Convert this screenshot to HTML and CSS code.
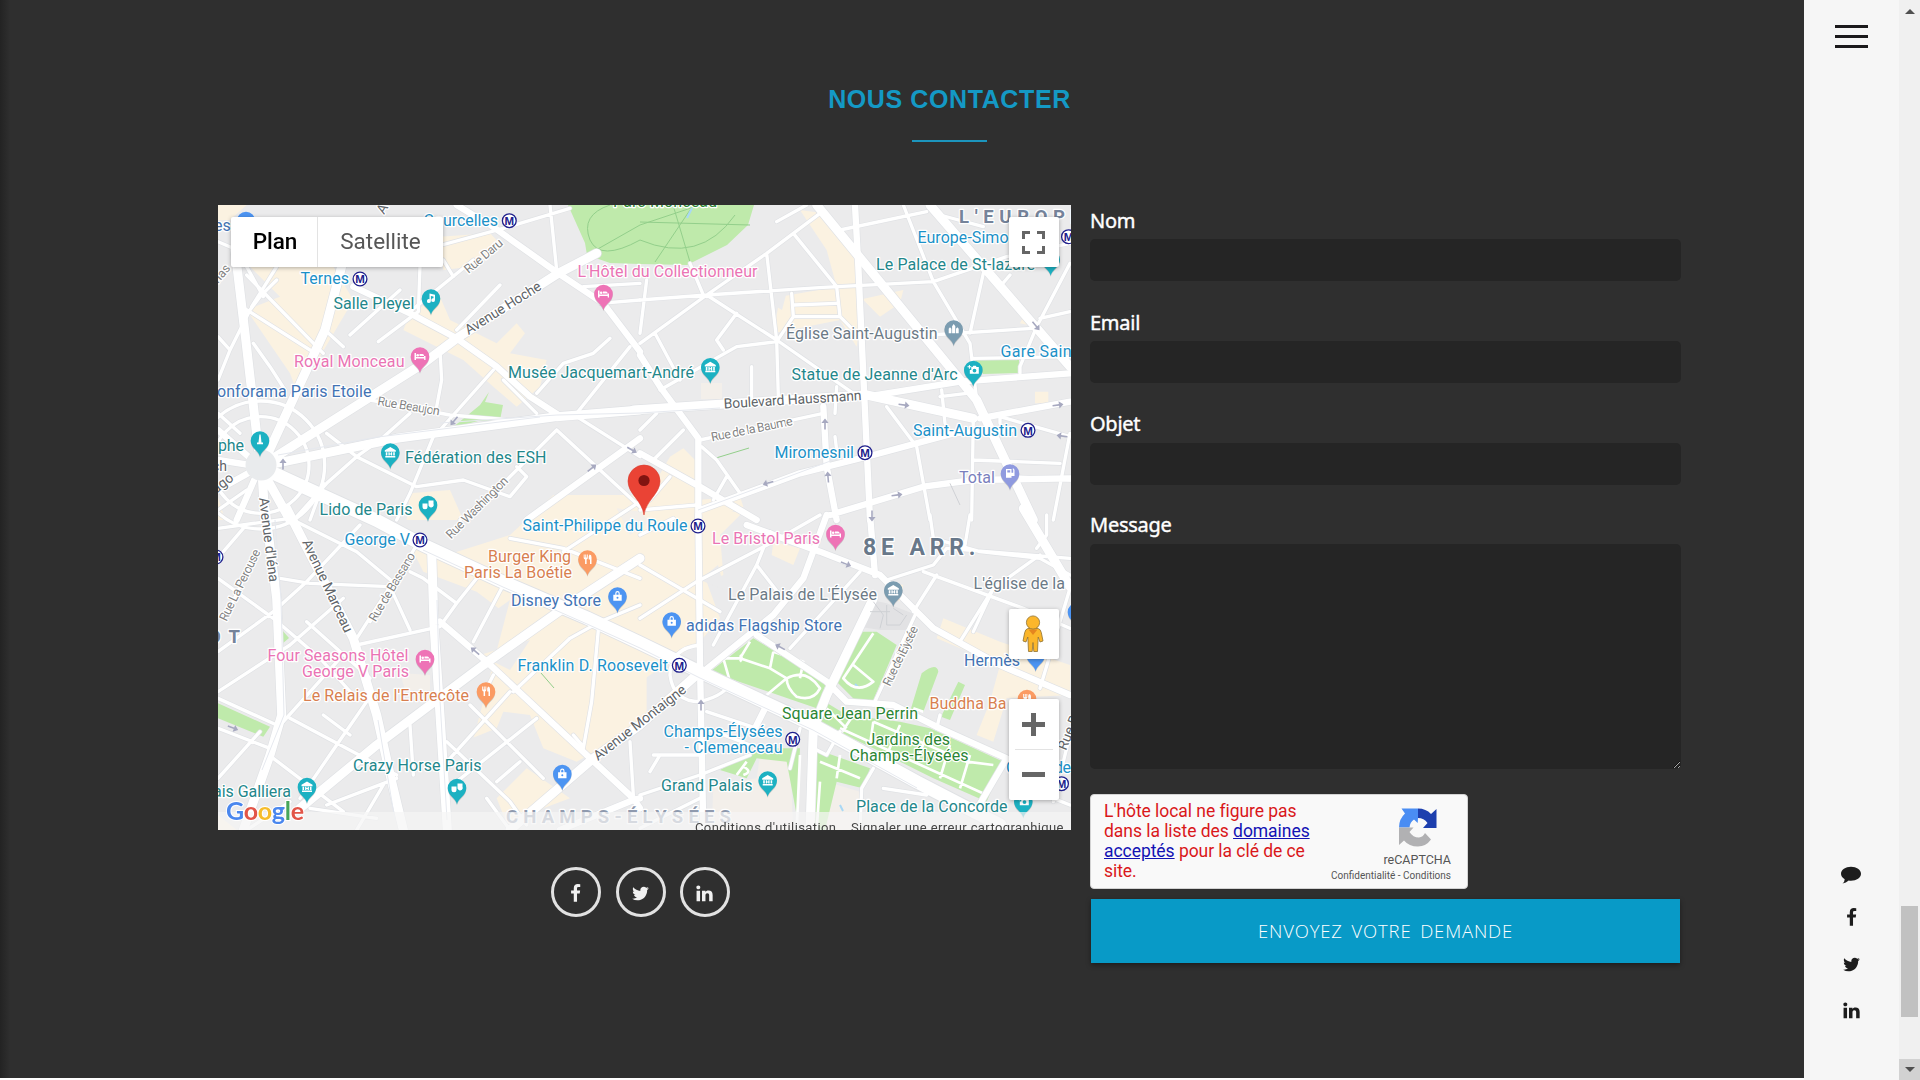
FILE: index.html
```html
<!DOCTYPE html>
<html lang="fr">
<head>
<meta charset="utf-8">
<title>Nous contacter</title>
<link rel="stylesheet" href="styles.css">
</head>
<body>
<svg class="sprite" aria-hidden="true">
  <symbol id="facebook" viewBox="0 0 1792 1792"><path d="M1343 12v264h-157q-86 0-116 36t-30 108v189h293l-39 296h-254v759h-306v-759h-255v-296h255v-218q0-186 104-288.5t277-102.5q147 0 228 12z"/></symbol>
  <symbol id="twitter" viewBox="0 0 1792 1792"><path d="M1684 408q-67 98-162 167 1 14 1 42 0 130-38 259.5t-115.5 248.5-184.5 210.5-258 146-323 54.5q-271 0-496-145 35 4 78 4 225 0 401-138-105-2-188-64.5t-114-159.5q33 5 61 5 43 0 85-11-112-23-185.5-111.5t-73.5-205.5v-4q68 38 146 41-66-44-105-115t-39-154q0-88 44-163 121 149 294.5 238.5t371.5 99.5q-8-38-8-74 0-134 94.5-228.5t228.5-94.5q140 0 236 102 109-21 205-78-37 115-142 178 93-10 186-50z"/></symbol>
  <symbol id="linkedin" viewBox="0 0 1792 1792"><path d="M477 625v991h-330v-991h330zm21-306q1 73-50.5 122t-135.5 49h-2q-82 0-132-49t-50-122q0-74 51.500-122.500t134.500-48.500 133 48.500 51 122.500zm1166 729v568h-329v-530q0-105-40.500-164.500t-126.500-59.500q-63 0-105.500 34.500t-63.500 85.500q-11 30-11 81v553h-329q2-399 2-647t-1-296l-1-48h329v144h-2q20-32 41-56t56.500-52 87-43.500 114.500-15.500q171 0 275 113.500t104 332.500z"/></symbol>
  <symbol id="comment" viewBox="0 0 20 18"><path d="M10 .8c5.500 0 10 3.100 10 7s-4.500 7-10 7q-1.200 0-2.300-.2Q5 17 1.500 17.600q2.200-1.800 2.200-4.300Q0 11.200 0 7.800C0 3.900 4.500.8 10 .8z"/></symbol>
  <symbol id="pin" viewBox="-12 -12 24 30" overflow="visible"><path d="M0 16.200C-1 10.500-9.300 7.500-9.300 0a9.300 9.300 0 0 1 18.600 0C9.300 7.500 1 10.500 0 16.200z"/></symbol>
  <g id="g-bed" class="glyph"><path d="M-5.500-3.500h1.500v4h8V-1q0-1.500-1.500-1.500H-.5v2H5.500v4H4.200V2h-8.200v1.500h-1.500z"/><circle cx="-2.300" cy="-1.300" r="1.300"/></g>
  <g id="g-museum" class="glyph"><path d="M0-5.500L5.500-2.200v1.400h-11v-1.400zM-4.500-.3h1.600v3.400h-1.600zM2.900-.3h1.600v3.400H2.900zM-1.900-.3h1.300v1.200H.6V-.3h1.300v3.400H.6V2H-.6v1.100h-1.300zM-5 3.500H5v1.400H-5z"/></g>
  <g id="g-food" class="glyph"><path d="M-3.800-5h.9v3h.7v-3h.9v3h.7v-3h.9v3.500Q.3-.4-.9 0v4.500h-1.500V0q-1.400-.4-1.400-1.500zM2-5q2.200.2 2 2.700V4.500H2.500V0H1.200v-3z"/></g>
  <g id="g-bag" class="glyph"><path fill-rule="evenodd" d="M-4.200-1.700h8.400v5.900h-8.400zM-1 1.300a1 1 0 0 0 2 0 1 1 0 0 0-2 0zM-2.200-1.700v-1.500a2.200 2.200 0 0 1 4.400 0v1.500H1.100v-1.400a1.100 1.100 0 0 0-2.200 0v1.400z"/></g>
  <g id="g-note" class="glyph"><path d="M-1.500-5L4-3.800v5.400a1.900 1.900 0 1 1-1.500-1.800v-1.900l-2.600-.5v5.200A2 2 0 1 1-1.500.7z"/></g>
  <g id="g-camera" class="glyph"><path fill-rule="evenodd" d="M-2-3h1.200l.8-1.200h2.500L3.300-3H5.500v6.800h-9V0H-2zM-.7.600a1.900 1.900 0 0 0 3.800 0 1.900 1.900 0 0 0-3.800 0z"/><path d="M-5.800-3.700h1.400v-1.400h1v1.400h1.400v1h-1.400v1.400h-1v-1.400h-1.400z"/></g>
  <g id="g-mask" class="glyph"><path d="M-5.500-1.500h5v3.200a2.500 2.500 0 0 1-5 0zM.5-4.500h5v3.200A2.500 2.500 0 0 1 .5.600z"/></g>
  <g id="g-tower" class="glyph"><path d="M-.6-6h1.200l.9 8H3v1.800h-6V2h1.500z"/></g>
  <g id="g-church" class="glyph"><path d="M-5 3.800v-4.500L-3.700-2.300l1.400 1.600v4.500zM-1.600 3.800v-7L0-5.500l1.600 2.300v7zM2.300 3.800v-4.500l1.400-1.600L5-.7v4.500z"/></g>
  <g id="g-fuel" class="glyph"><path fill-rule="evenodd" d="M-4-4.500h5.500v3.800h1.700V-3.500L2.500-4.500l.7-.7L4.500-3.700v6.200h-3v1.800H-4zM-2.700-3.300v2.300h2.900v-2.300z"/></g>
  <g id="metro"><circle r="6.900"/><text y="4.300" text-anchor="middle">M</text></g>
  <path id="arrow" d="M-5.500-.8H1V-3.600L5.500 0 1 3.600V.8h-6.500z"/>
</svg>

<div class="page">
  <main class="contact">
    <header class="heading">
      <h2>NOUS CONTACTER</h2>
      <span class="rule"></span>
    </header>
    <div class="columns">
      <section class="left">
        <div class="map">
          <svg class="tiles" viewBox="218 205 853 625">
            <defs>
              <g id="minor">
                <g transform="translate(210 200) scale(.33333)">
                  <path d="M24 125L70 145M110 225L340 460M95 320L300 450M125 320L200 200M24 410L60 450L120 330M130 430L180 500L225 570M24 540L60 450M630 200L625 335L505 425M420 405L570 270M640 150L880 85L1080 25M600 335L790 180M700 180L730 230M1020 15L1040 210M690 450L695 540L680 620M480 600L720 645L960 665M600 640L510 720M850 510L690 690M880 540L980 640M1260 440L1100 640M1200 415L1150 460L1060 490L980 580M870 255L740 390M1040 690L880 850L750 960M1100 650L1290 770M1040 690L1290 920M670 710L600 880L560 960M440 770L620 860L760 840L900 890L950 830L920 800M350 700L440 770L350 850L260 950M440 770L510 720M345 390L400 440M24 640L90 700M110 200L160 290M120 330L150 290L200 240M24 930L110 870M300 960L340 850M1120 260L1290 250M1170 310L1290 300"/>
                  <circle cx="152" cy="795" r="145"/><circle cx="152" cy="795" r="192"/>
                </g>
                <g transform="translate(640 200) scale(.33333)">
                  <path d="M0 300L200 285L550 262L880 245L1100 170L1290 130M0 430L200 285L380 160L540 40M200 285L410 420L640 580M380 160L410 420L415 590M150 190L190 285M460 100L590 260L600 350L650 400M455 280L460 350L600 350M460 315L590 310M410 425L460 350M410 425L290 440L60 570M290 340L230 420L250 450M45 400L120 540M600 90L860 35M410 65L500 15M790 15L880 245L990 430L1010 600M1030 220L990 400M870 405L1180 385M1200 355L1290 335M1290 190L1190 380L1140 500V520M1000 475L1290 470M905 570L915 670M900 590L980 580M740 620L830 740L870 960M1000 650L995 960M1000 780L1260 790M1290 700L1240 960M1080 650L1290 710M335 500V590M550 640L180 720M185 740L230 780L300 880M260 830L220 900M130 690L40 780M90 830L30 900M0 930L170 915M1120 830L1290 840M585 710L590 750M20 240L0 400M590 560L585 640M1080 650V670M900 45L1030 80M1110 225L1080 260M50 640L0 690"/>
                </g>
                <g transform="translate(210 515) scale(.33333)">
                  <path d="M24 40L240 10M210 190L300 205L540 215L600 345M540 215L440 370M620 90L480 320M440 390L690 335M24 190L190 310L330 430L430 540M24 410L190 290L290 200L450 30M24 530L240 390L400 250M290 320L480 490M220 620L390 430M240 610L560 780M470 560L380 690L270 850M190 730L400 890M24 550L200 630M24 640L180 700M350 870L560 790M600 630L610 780M300 880L500 910M130 130L50 300M740 265L640 190L600 170M800 190L740 265L700 320M880 210L790 380M780 570L1000 790M850 480L830 520M980 610L740 800M910 530L1080 370L1170 320L1290 270M1165 345L1145 560L1120 700M1090 660L1120 695M900 530L720 730M710 680L900 860L950 930M860 800L930 740M1260 680L1270 840M900 70L1060 100L1290 190M1060 110L1290 -40M340 600L420 660M260 20L440 110L560 210M110 945L240 860M830 850L900 945M24 790L150 650M40 110L100 40M520 810L440 945"/>
                </g>
                <g transform="translate(640 515) scale(.33333)">
                  <path d="M0 310L170 200L400 80L540 0M0 60L100 10M220 390L350 150L390 50M350 150L420 240M0 150L240 290M450 400L660 170M740 195L880 150L920 100L1290 130M870 0L880 70L1020 110L1200 130L1290 180M990 0L975 90M850 170L1150 280L1290 340M960 380L1060 220L1200 120M1000 350L1060 220M890 180L820 290M1290 220L1200 520M830 290L700 570M40 720L180 720M30 770L60 720M0 840L180 780L330 720M0 940L180 850M700 760L665 820L660 945M900 600L890 640M180 390Q90 400 90 480Q100 560 180 560Q260 540 270 500M200 590L350 640L390 560M340 640L370 580M1220 0V60L1190 100M1290 660L1240 860M1240 850L1290 870M730 820L860 840M200 640L330 690M520 700L560 720L600 650M480 640L450 760"/>
                </g>
              </g>
              <g id="medium">
                <g transform="translate(210 200) scale(.33333)">
                  <path d="M430 260L600 340L740 415L860 500L960 590L1045 645M820 60L1045 220L1180 310L1290 455M740 15L830 70M950 960L1290 715M24 780L150 800L24 870M150 800L80 960M150 800L24 690"/>
                </g>
                <g transform="translate(640 200) scale(.33333)">
                  <path d="M645 15L655 200L690 960M680 590L960 545L1290 520M0 465L60 560L175 715L175 960M0 760L180 860L350 960M180 930L480 820L700 765L940 700L1110 690M570 945L850 860L1000 840L1290 835M550 620L560 800L590 960M1020 655L1290 605"/>
                </g>
                <g transform="translate(210 515) scale(.33333)"><path d="M690 320L830 440L1130 720L1270 850L1290 880M1050 945L1270 855L1290 850"/></g>
                <g transform="translate(640 515) scale(.33333)"><path d="M175 0L180 450L190 945M560 0L490 190L400 300L190 470M320 30L540 110L720 180L880 340L1080 450L1290 540M690 0L705 180M350 360L560 500L620 560L760 570L900 640L1100 730L1000 900"/></g>
              </g>
              <g id="major">
                <g transform="translate(210 200) scale(.33333)"><path d="M75 150L105 400L150 790M400 180L345 390L160 790M150 800L640 490L740 415L1045 220L1160 160M150 800L560 715L1040 650L1290 630M150 800L500 965M150 800L240 960M155 800L165 960"/></g>
                <g transform="translate(640 200) scale(.33333)"><path d="M530 15L1010 600L1180 960M870 15L1290 500M-20 630L250 612L680 585L1000 655"/></g>
                <g transform="translate(210 515) scale(.33333)"><path d="M230 -20L430 370L500 600L545 800L580 945M165 -20L200 250L215 600L180 720L100 945M665 110L672 330L690 600L712 945M270 880L500 690L820 450L1060 280L1290 130M900 945L1150 730L1290 630L1460 480"/></g>
                <g transform="translate(640 515) scale(.33333)"><path d="M700 250L560 540L520 640L510 945M1150 -20L1290 215"/></g>
              </g>
              <path id="champs" d="M260 467L376 520L423 545L503 582L587 618L640 643L700 672L813 725L917 782L1000 825"/>
            </defs>
            <rect class="land" x="218" y="205" width="853" height="625"/>
            <g class="commerce">
              <path transform="translate(210 200) scale(.33333)" d="M24 15H110L60 60H24zM120 200H370L430 300 300 520 270 600 240 520 110 330 210 290zM690 110L840 100 880 140 780 200 700 210zM600 340L690 290 720 360 860 430 920 370 945 400 900 460 1010 480 990 560 920 620 850 560 760 480 580 390zM600 880L720 870 760 960H590zM24 890L45 960H24z"/>
              <path transform="translate(640 200) scale(.33333)" d="M480 30L550 40 640 130 655 300 790 270 780 310 720 350 670 300 650 440 600 360 400 400 420 290 590 260 560 150zM90 770L130 745 165 780 170 900 300 890 310 920 200 970H0L20 890zM1185 575H1225V610H1185zM1150 350L1190 380 1140 370z"/>
              <path transform="translate(210 515) scale(.33333)" d="M600 90L680 130 900 60 1030 -60H1310V620L1100 740 1000 700 960 600 880 590 860 640 760 680 730 600 740 430 840 380 880 290 800 230 640 170zM860 850L950 760 1080 850 1000 880 900 950zM24 900L80 945H24z"/>
              <path transform="translate(640 515) scale(.33333)" d="M0-10H310L240 60 250 180 200 200 240 310 180 380 0 500zM400 80L480 100 460 150 395 120zM910 310L1080 380 1290 450V540L1100 550 1060 680 1010 660 1050 560 1080 450 890 370zM740 200L790 210 780 260 740 230z"/>
              <path class="inset" d="M460 790L510 600 440 650zM480 655L530 640 510 670zM700 580L718 565 725 590z M765 300L790 280 782 310z"/>
            </g>
            <path class="civic" transform="translate(640 515) scale(.33333)" d="M360 720L450 730 460 945H215L220 810 350 790zM560 800L660 830 650 945H560zM-70 -20L0 -10 30 20 -30 60z"/>
            <path class="civic" d="M701 383h21v16h-21zM400 673l30 2v15h-25z"/>
            <path class="estate" transform="translate(640 515) scale(.33333)" d="M695 255L740 265 830 300 800 345 720 345 660 335z"/>
            <g class="park">
              <path d="M568 205L585 243L587 255L610 263L640 264L687 265L727 245L748 225L754 205zM975 360L1019 359V373L983 374zM452 428L480 405 489 392 485 402 503 405 500 420 478 421zM282 630L289 638 282 644z"/>
              <path transform="translate(210 515) scale(.33333)" d="M24 565L180 635 160 665 24 610z"/>
              <path transform="translate(640 515) scale(.33333)" d="M340 370L210 470 530 580 560 500zM660 350L590 500 650 560 700 555 770 390 710 350zM845 475Q890 440 895 470L850 590H810zM955 500L975 510 930 615 903 605zM555 560L620 600 780 620 870 640 1090 740 1040 860 880 790 700 700 530 620zM520 700L690 760 668 820 590 800 555 945H520zM240 765L360 700 480 700 470 900 440 740 350 730 320 790z"/>
            </g>
            <g class="park-lines">
              <path d="M610 205Q580 215 590 240Q600 262 640 240M596 250L640 225L700 205M640 222L750 225M655 262L690 210M673 205L690 262M640 240Q700 265 735 215M716 458L749 448M541 673L554 688"/>
            </g>
            <path class="water" d="M692 208L687 218M855 684l3 3M840 805l3 6"/>
            <path class="park-paths" transform="translate(640 515) scale(.33333)" d="M250 430L270 500M330 380L300 430M400 410L390 460 440 490 380 540M390 460L300 430 250 430M440 490Q500 460 540 520Q520 560 470 545Q440 520 440 490M400 410L490 440 480 490M700 355L610 490Q650 540 700 500L640 450M850 590L820 580M640 600L600 660M700 620L690 690M780 630L740 720M860 660L830 740M930 690L900 790M990 720L960 820M600 640L1040 840M700 620L980 740 1060 750M560 580L620 640M300 440Q310 430 300 420M320 740L290 780M310 755Q340 770 310 780M540 740L660 790M600 720L590 790M540 800L530 945M480 720L470 945"/>
            <g class="casing"><use href="#minor" class="w-minor"/><use href="#medium" class="w-medium"/><use href="#major" class="w-major"/><use href="#champs" class="w-champs"/></g>
            <g class="road"><use href="#minor" class="w-minor"/><use href="#medium" class="w-medium"/><use href="#major" class="w-major"/><use href="#champs" class="w-champs"/></g>
            <path class="lane" d="M423 550L503 587L587 624L640 648L700 678L813 730L917 788M440 423L557 415L640 413L720 408M278 455L378 437L540 417M275 520L281 600L284 715L262 770M437 600L440 700L447 820M378 720L395 820M860 450L720 502L698 510"/>
            <circle class="star" cx="261" cy="465" r="15.500"/>
            <path class="estate-lines" transform="translate(640 515) scale(.33333)" d="M700 260L730 300 720 340M740 270V330H780L800 300M690 290H750M760 280L790 300M930 -95L960 -30"/>
            <g class="arrows">
              <use href="#arrow" transform="translate(454 421) rotate(130)"/><use href="#arrow" transform="translate(283 464) rotate(-90)"/>
              <use href="#arrow" transform="translate(632 450) rotate(30)"/><use href="#arrow" transform="translate(592 468) rotate(-38)"/>
              <use href="#arrow" transform="translate(904 405) rotate(8)"/><use href="#arrow" transform="translate(1058 405) rotate(-8)"/>
              <use href="#arrow" transform="translate(1062 436) rotate(188)"/><use href="#arrow" transform="translate(1036 326) rotate(50)"/>
              <use href="#arrow" transform="translate(825 424) rotate(-90)"/><use href="#arrow" transform="translate(828 477) rotate(-95)"/>
              <use href="#arrow" transform="translate(768 483) rotate(165)"/><use href="#arrow" transform="translate(897 495) rotate(-8)"/>
              <use href="#arrow" transform="translate(872 516) rotate(90)"/><use href="#arrow" transform="translate(846 564) rotate(22)"/>
              <use href="#arrow" transform="translate(780 647) rotate(208)"/><use href="#arrow" transform="translate(701 705) rotate(-90)"/>
              <use href="#arrow" transform="translate(475 651) rotate(220)"/><use href="#arrow" transform="translate(233 728) rotate(20)"/>
            </g>

            <g class="street">
              <text transform="translate(468.500 274) rotate(-40)" textLength="46">Rue Daru</text>
              <text transform="translate(377 405) rotate(9.500)" textLength="63">Rue Beaujon</text>
              <text transform="translate(712 441.500) rotate(-11.500)" textLength="83">Rue de la Baume</text>
              <text transform="translate(451 539.500) rotate(-45)" textLength="82">Rue Washington</text>
              <text transform="translate(226.500 622) rotate(-64)" textLength="78">Rue La Perouse</text>
              <text transform="translate(375.500 622.500) rotate(-59)" textLength="78">Rue de Bassano</text>
              <text transform="translate(890 687) rotate(-64)" textLength="65">Rue de l'Elysée</text>
              <text transform="translate(218 284) rotate(-50)">has</text>
            </g>
            <g class="avenue">
              <text transform="translate(468.500 335) rotate(-32)" textLength="87">Avenue Hoche</text>
              <text transform="translate(724 408.500) rotate(-3.500)" textLength="138">Boulevard Haussmann</text>
              <text transform="translate(259 498) rotate(83)" textLength="85">Avenue d'Iéna</text>
              <text transform="translate(302 542) rotate(65)" textLength="101">Avenue Marceau</text>
              <text transform="translate(598 761) rotate(-38)" textLength="113">Avenue Montaigne</text>
              <text transform="translate(384 215) rotate(-60)">A</text>
              <text transform="translate(1066 751) rotate(-68)">Rue B</text>
              <text transform="translate(216 494) rotate(-38)">ago</text>
              <text x="212" y="471">ch</text>
            </g>
            <g class="district">
              <text x="959" y="222.700" textLength="122">L'EUROPE</text>
              <text class="big" x="863" y="555.300" textLength="112.500">8E ARR.</text>
              <text x="208" y="642.700" textLength="32">OT</text>
              <text class="faint" x="506" y="823.300" textLength="225">CHAMPS-ÉLYSÉES</text>
            </g>
            <g class="poi transit">
              <text x="423.500" y="226" textLength="74.500">Courcelles</text><text x="300.500" y="284.300" textLength="48.500">Ternes</text>
              <text x="917.500" y="242.700" textLength="91">Europe-Simo</text><text x="1000.500" y="357" textLength="71">Gare Sain</text>
              <text x="913" y="435.700" textLength="104">Saint-Augustin</text><text x="774.500" y="458.300" textLength="79.500">Miromesnil</text>
              <text x="522.500" y="531.300" textLength="165">Saint-Philippe du Roule</text><text x="344.500" y="545" textLength="65.500">George V</text>
              <text x="517.500" y="671" textLength="150.500">Franklin D. Roosevelt</text><text x="663.500" y="737" textLength="119">Champs-Élysées</text>
              <text x="684.500" y="753" textLength="98">- Clemenceau</text><text x="1006" y="772.700" textLength="65">Concorde</text>
            </g>
            <g class="poi culture">
              <text x="333.500" y="308.700" textLength="81">Salle Pleyel</text><text x="508" y="377.700" textLength="186">Musée Jacquemart-André</text>
              <text x="218" y="451" textLength="26">phe</text><text x="405" y="462.700" textLength="141.500">Fédération des ESH</text>
              <text x="319.500" y="515" textLength="93">Lido de Paris</text><text x="876" y="270" textLength="159">Le Palace de St-lazare</text>
              <text x="791.500" y="380" textLength="166">Statue de Jeanne d'Arc</text><text x="353" y="771.300" textLength="128.500">Crazy Horse Paris</text>
              <text x="213" y="797" textLength="78">ais Galliera</text><text x="661" y="790.700" textLength="91.500">Grand Palais</text>
              <text x="856" y="812" textLength="151.500">Place de la Concorde</text>
            </g>
            <g class="poi hotel">
              <text x="577.500" y="277.300" textLength="180">L'Hôtel du Collectionneur</text><text x="294" y="366.700" textLength="110.500">Royal Monceau</text>
              <text x="267.500" y="661" textLength="141">Four Seasons Hôtel</text><text x="302" y="677" textLength="107">George V Paris</text>
              <text x="712" y="544" textLength="108">Le Bristol Paris</text>
            </g>
            <g class="poi shop">
              <text x="217" y="397" textLength="154.500">onforama Paris Etoile</text><text x="214" y="230.700">es</text>
              <text x="511" y="606.300" textLength="90">Disney Store</text><text x="686" y="631.300" textLength="156">adidas Flagship Store</text>
              <text x="964" y="666" textLength="56">Hermès</text>
            </g>
            <g class="poi place">
              <text x="786" y="339.300" textLength="151.500">Église Saint-Augustin</text><text x="973.500" y="589.300" textLength="91.500">L'église de la</text>
              <text x="728" y="600" textLength="149">Le Palais de L'Élysée</text>
            </g>
            <g class="poi fuel"><text x="959" y="483" textLength="36">Total</text></g>
            <g class="poi food">
              <text x="488" y="561.700" textLength="83">Burger King</text><text x="464" y="577.700" textLength="108">Paris La Boétie</text>
              <text x="303" y="701.300" textLength="166">Le Relais de l'Entrecôte</text><text x="929.500" y="709" textLength="77">Buddha Ba</text>
            </g>
            <g class="poi garden">
              <text x="613" y="207.300" textLength="104">Parc Monceau</text><text x="782" y="718.700" textLength="136">Square Jean Perrin</text>
              <text x="866.500" y="744.700" textLength="83.500">Jardins des</text><text x="849.500" y="760.700" textLength="119">Champs-Élysées</text>
            </g>
            <g class="stations">
              <use href="#metro" x="509.300" y="220.700"/><use href="#metro" x="360" y="279"/><use href="#metro" x="1068.500" y="236.700"/><use href="#metro" x="1028" y="430.300"/>
              <use href="#metro" x="865" y="452.700"/><use href="#metro" x="698" y="526"/><use href="#metro" x="420" y="540"/><use href="#metro" x="216" y="557"/>
              <use href="#metro" x="679.300" y="665.300"/><use href="#metro" x="792.700" y="739.300"/><use href="#metro" x="1061.500" y="783.700"/>
            </g>
            <g class="pins">
              <g class="p-culture">
                <g transform="translate(431 298.500)"><use href="#pin" x="-12" y="-12" width="24" height="30"/><use href="#g-note"/></g>
                <g transform="translate(710.300 367.300)"><use href="#pin" x="-12" y="-12" width="24" height="30"/><use href="#g-museum"/></g>
                <g transform="translate(260 440.500)"><use href="#pin" x="-12" y="-12" width="24" height="30"/><use href="#g-tower"/></g>
                <g transform="translate(390.300 452.500)"><use href="#pin" x="-12" y="-12" width="24" height="30"/><use href="#g-museum"/></g>
                <g transform="translate(428 505)"><use href="#pin" x="-12" y="-12" width="24" height="30"/><use href="#g-mask"/></g>
                <g transform="translate(1050.700 259.500)"><use href="#pin" x="-12" y="-12" width="24" height="30"/></g>
                <g transform="translate(973.300 370)"><use href="#pin" x="-12" y="-12" width="24" height="30"/><use href="#g-camera"/></g>
                <g transform="translate(457 788)"><use href="#pin" x="-12" y="-12" width="24" height="30"/><use href="#g-mask"/></g>
                <g transform="translate(307 787)"><use href="#pin" x="-12" y="-12" width="24" height="30"/><use href="#g-museum"/></g>
                <g transform="translate(767.700 780.500)"><use href="#pin" x="-12" y="-12" width="24" height="30"/><use href="#g-museum"/></g>
                <g transform="translate(1023.300 801.500)"><use href="#pin" x="-12" y="-12" width="24" height="30"/><use href="#g-camera"/></g>
              </g>
              <g class="p-hotel">
                <g transform="translate(603.500 294)"><use href="#pin" x="-12" y="-12" width="24" height="30"/><use href="#g-bed"/></g>
                <g transform="translate(420 356.500)"><use href="#pin" x="-12" y="-12" width="24" height="30"/><use href="#g-bed"/></g>
                <g transform="translate(425 659)"><use href="#pin" x="-12" y="-12" width="24" height="30"/><use href="#g-bed"/></g>
                <g transform="translate(835.500 534)"><use href="#pin" x="-12" y="-12" width="24" height="30"/><use href="#g-bed"/></g>
              </g>
              <g class="p-food">
                <g transform="translate(587.500 559.500)"><use href="#pin" x="-12" y="-12" width="24" height="30"/><use href="#g-food"/></g>
                <g transform="translate(486 691.500)"><use href="#pin" x="-12" y="-12" width="24" height="30"/><use href="#g-food"/></g>
                <g transform="translate(1027 699)"><use href="#pin" x="-12" y="-12" width="24" height="30"/><use href="#g-food"/></g>
              </g>
              <g class="p-shop">
                <g transform="translate(246 221)"><use href="#pin" x="-12" y="-12" width="24" height="30"/></g>
                <g transform="translate(617.500 596.500)"><use href="#pin" x="-12" y="-12" width="24" height="30"/><use href="#g-bag"/></g>
                <g transform="translate(671.700 621.500)"><use href="#pin" x="-12" y="-12" width="24" height="30"/><use href="#g-bag"/></g>
                <g transform="translate(562.300 774)"><use href="#pin" x="-12" y="-12" width="24" height="30"/><use href="#g-bag"/></g>
                <g transform="translate(1035.700 655)"><use href="#pin" x="-12" y="-12" width="24" height="30"/></g>
                <g transform="translate(1077 612)"><use href="#pin" x="-12" y="-12" width="24" height="30"/></g>
              </g>
              <g class="p-place">
                <g transform="translate(953.700 329.500)"><use href="#pin" x="-12" y="-12" width="24" height="30"/><use href="#g-church"/></g>
                <g transform="translate(893.300 590.500)"><use href="#pin" x="-12" y="-12" width="24" height="30"/><use href="#g-museum"/></g>
              </g>
              <g class="p-fuel" transform="translate(1010 473.500)"><use href="#pin" x="-12" y="-12" width="24" height="30"/><use href="#g-fuel"/></g>
            </g>
            <path class="marker" d="M644 515C642 500 628 494 628 481a16 16 0 0 1 32 0C660 494 646 500 644 515z"/>
            <circle class="marker-dot" cx="644" cy="480.500" r="5.600"/>
            <rect class="legal-bg" x="218" y="812" width="853" height="18"/>
            <g class="legal"><text x="695" y="832.300" textLength="141">Conditions d'utilisation</text><text x="851" y="832.300" textLength="212.500">Signaler une erreur cartographique</text></g>
            <text class="google" x="226" y="820" textLength="78"><tspan class="b">G</tspan><tspan class="r">o</tspan><tspan class="y">o</tspan><tspan class="b">g</tspan><tspan class="g">l</tspan><tspan class="r">e</tspan></text>
          </svg>
          <div class="ctl types"><span class="on">Plan</span><span>Satellite</span></div>
          <div class="ctl full"><svg width="23" height="23" viewBox="0 0 23 23"><path d="M1.500 8V1.500H8M15 1.500h6.500V8M21.500 15v6.500H15M8 21.500H1.500V15"/></svg></div>
          <div class="ctl pegman"><svg width="24" height="38" viewBox="0 0 24 38"><path class="body" d="M7 13.500h10q2.500.5 3.300 4l1.700 8.500-3 1-1.800-5-.7 14.500h-3.700L12 27.500l-.8 9H7.500L6.800 22 5 27l-3-1 1.700-8.500q.8-3.500 3.300-4z"/><path class="bib" d="M7.500 14.500h9L12 20z"/><circle class="head" cx="12" cy="7.500" r="6.600"/></svg></div>
          <div class="ctl zoom"><span class="plus"></span><span class="minus"></span></div>
        </div>
        <div class="social">
          <a><svg><use href="#facebook"/></svg></a><a><svg><use href="#twitter"/></svg></a><a><svg><use href="#linkedin"/></svg></a>
        </div>
      </section>
      <form class="form">
        <label><span>Nom</span><input type="text"></label>
        <label><span>Email</span><input type="text"></label>
        <label class="subject"><span>Objet</span><input type="text"></label>
        <label class="msg"><span>Message</span><textarea></textarea></label>
        <div class="captcha">
          <p>L'hôte local ne figure pas dans la liste des <u>domaines acceptés</u> pour la clé de ce site.</p>
          <div class="brand">
            <svg width="38" height="39" viewBox="0 0 38 39"><path class="c-dark" d="M19 .5Q27 .5 32 6l5.500-5V20H24l4.500-5Q25 10 19 10z"/><path class="c-light" d="M19 .5V10l-.3 5-3.700-3.500Q11 14 10.500 19.500H0Q0 11 6 5.500L2.500.5z"/><path class="c-grey" d="M0 19.500H14.500L10.500 24Q14 29.500 20 29.500q4-.5 6-4.500l6 6.500Q27 38.500 19 38.500 10 38.500 5 32.500L0 37z"/></svg>
            <span class="name">reCAPTCHA</span>
            <span class="terms">Confidentialité - Conditions</span>
          </div>
        </div>
        <button type="button">ENVOYEZ VOTRE DEMANDE</button>
      </form>
    </div>
  </main>
  <aside class="side">
    <div class="burger"><i></i><i></i><i></i></div>
    <nav><svg class="talk"><use href="#comment"/></svg><svg><use href="#facebook"/></svg><svg><use href="#twitter"/></svg><svg><use href="#linkedin"/></svg></nav>
  </aside>
  <div class="scrollbar"><span class="up"></span><span class="thumb"></span><span class="down"></span></div>
</div>
</body>
</html>
```
FILE: styles.css
```css
* { box-sizing: border-box; }
body { margin: 0; background: #fff; font-family: "Open Sans", sans-serif; overflow: hidden; }
.sprite { display: none; }
.page { display: flex; width: 1920px; height: 1080px; }
.contact { width: 1804px; height: 1078px; background: linear-gradient(90deg, #232323, #2f2f2f 10px); padding: 84px 123px 0 218px; }
.heading { width: 1463px; height: 121px; display: flex; flex-direction: column; align-items: center; }
h2 { margin: 0; font: bold 25px/30px "Liberation Sans", sans-serif; letter-spacing: .6px; color: #1499c5; white-space: nowrap; }
.rule { width: 75px; height: 2px; margin-top: 26px; background: #1c95bd; }
.columns { display: flex; gap: 19px; width: 1463px; }
.left { width: 853px; }

.map { position: relative; width: 853px; height: 625px; overflow: hidden; font-family: Roboto, sans-serif; }
.tiles { display: block; width: 853px; height: 625px; }
.land { fill: #ebebec; }
.commerce { fill: #fbf2e1; }
.inset { fill: #ebebec; }
.civic { fill: #f3efea; }
.estate { fill: #e2e2e4; }
.estate-lines { fill: none; stroke: #cfd1d5; stroke-width: 3; }
.park { fill: #bfeaab; }
.park-lines { fill: none; stroke: #93cf8b; stroke-width: 1; }
.park-paths { fill: none; stroke: #fff; stroke-width: 8; stroke-linejoin: round; }
.water { fill: none; stroke: #a9d8f5; stroke-width: 2; }
.casing, .road { fill: none; stroke-linecap: round; stroke-linejoin: round; }
.casing { stroke: #e0e2e5; }
.road { stroke: #fff; }
.road .w-minor { stroke-width: 10px; }
.casing .w-minor { stroke-width: 14px; }
.road .w-medium { stroke-width: 19px; }
.casing .w-medium { stroke-width: 23px; }
.road .w-major { stroke-width: 27px; }
.casing .w-major { stroke-width: 31px; }
.road .w-champs { stroke-width: 13px; }
.casing .w-champs { stroke-width: 15px; }
.lane { fill: none; stroke: #e6e9ef; stroke-width: 1; }
.star { fill: #e9ebed; }
.arrows { fill: #a7a9c0; }
.street, .avenue, .district, .poi { paint-order: stroke; stroke: #fff; stroke-width: 2.500px; stroke-linejoin: round; }
.street { font-size: 12.500px; fill: #838383; }
.avenue { font-size: 14px; fill: #606468; }
.district { font-size: 18.500px; font-weight: 700; fill: #75839a; }
.district .big { font-size: 23px; fill: #68788a; }
.district .faint { fill: #8f9aae; }
.poi { font-size: 16px; }
.transit { fill: #1c91c8; }
.culture { fill: #23878b; }
.hotel { fill: #ea74b4; }
.shop { fill: #4273b4; }
.place { fill: #6c7a86; }
.fuel { fill: #7a7fbd; }
.food { fill: #d87f50; }
.garden { fill: #2c8635; }
#metro circle { fill: #fff; stroke: #20208c; stroke-width: 1.300px; }
#metro text { font: 700 11.500px "Liberation Sans", sans-serif; fill: #20208c; }
.pins { filter: drop-shadow(0 1px .5px rgba(80, 80, 80, .25)); }
.glyph { fill: #fff; }
.p-culture { fill: #1cb1c2; }
.p-hotel { fill: #ee73b6; }
.p-food { fill: #fb9b63; }
.p-shop { fill: #4c94f2; }
.p-place { fill: #7b9cb0; }
.p-fuel { fill: #8f9adf; }
.marker { fill: #ea4335; stroke: #d73b2e; stroke-width: .6; }
.marker-dot { fill: #811411; }
.legal-bg { fill: #f5f5f5; fill-opacity: .7; }
.legal { font-size: 13px; fill: #444; }
.google { font: 500 25px Lato, sans-serif; font-weight: 700; paint-order: stroke; stroke: #fff; stroke-width: 2px; }
.b { fill: #4a87ee; }
.r { fill: #e25548; }
.y { fill: #f6bd2c; }
.g { fill: #47a65a; }

.ctl { position: absolute; background: #fff; border-radius: 2px; box-shadow: 0 1px 4px rgba(0, 0, 0, .3); display: flex; align-items: center; justify-content: center; }
.types { left: 13px; top: 12px; width: 212px; height: 50px; font-size: 22.500px; color: #565656; }
.types span { width: 125px; height: 50px; text-align: center; line-height: 48px; }
.types .on { width: 87px; padding-left: 2px; border-right: 1px solid #e3e3e3; color: #000; font-weight: 500; }
.full { left: 791px; top: 12px; width: 50px; height: 50px; padding-right: 1px; }
.full path { fill: none; stroke: #666; stroke-width: 3; }
.pegman { left: 791px; top: 404px; width: 50px; height: 50px; padding-right: 2px; }
.body, .head { fill: #fbb62b; stroke: #8f7233; stroke-width: .8; }
.bib { fill: #e5851f; }
.zoom { left: 791px; top: 494px; width: 50px; height: 101px; flex-direction: column; padding: 0 6px; }
.zoom span { width: 38px; height: 50px; background: linear-gradient(#666, #666) 7px 22px/23px 5px no-repeat; }
.zoom .plus { border-bottom: 1px solid #e3e3e3; background: linear-gradient(#666, #666) 7px 22px/23px 5px no-repeat, linear-gradient(#666, #666) 16px 13px/5px 23px no-repeat; }

.social { display: flex; gap: 14.500px; padding: 37px 0 0 333px; }
.social a { width: 50px; height: 50px; border: 3px solid #e2e2e2; border-radius: 50%; display: flex; align-items: center; justify-content: center; }
.social svg { width: 19px; height: 19px; fill: #f1f1f1; margin: 2px 1px 0 0; }

.form { width: 591px; }
label { display: block; height: 102px; color: #fff; font-family: "Noto Sans", sans-serif; font-size: 20px; line-height: 31px; }
label span { display: block; height: 34px; letter-spacing: -.25px; -webkit-text-stroke: .4px #fff; }
label.subject { height: 101px; }
label.subject span, label.msg span { line-height: 29px; }
input, textarea { display: block; width: 591px; height: 42px; border: 0; border-radius: 5px; background: #252525; outline: 0; color: #fff; }
textarea { height: 225px; resize: vertical; }
label.msg { height: 284px; }
.captcha { display: flex; justify-content: space-between; width: 378px; height: 95px; background: #f9f9f9; border: 1px solid #d3d3d3; border-radius: 4px; padding: 6px 16px 0 13px; font-family: Roboto, sans-serif; }
.captcha p { margin: 0; width: 215px; font-size: 17.500px; line-height: 20px; letter-spacing: -.05px; color: #d9171a; }
.captcha u { color: #1212b4; }
.brand { display: flex; flex-direction: column; align-items: flex-end; margin-left: -60px; padding-top: 7px; color: #555; white-space: nowrap; }
.brand svg { margin-right: 14px; }
.name { font-size: 12.500px; line-height: 15px; margin-top: 5px; }
.terms { font-size: 10px; line-height: 12px; margin-top: 3px; }
.c-dark { fill: #1d3fae; }
.c-light { fill: #4a8df3; }
.c-grey { fill: #b1b1b3; }
button { display: block; width: 589px; height: 64px; margin: 10px 1px 0; padding: 0 0 2px; border: 0; background: #089ac7; color: #fff; font: 300 18.500px "Open Sans", sans-serif; letter-spacing: .85px; word-spacing: 3px; box-shadow: 0 2px 5px rgba(0, 0, 0, .4); }

.side { width: 95px; height: 1080px; background: #f6f6f6; display: flex; flex-direction: column; justify-content: space-between; padding: 25px 0 60px 31px; }
.burger { display: flex; flex-direction: column; gap: 7px; }
.burger i { width: 33px; height: 3px; background: #1b1a1c; }
nav { display: flex; flex-direction: column; gap: 27px; padding-left: 7px; }
nav svg { width: 19px; height: 19px; fill: #1d1d1d; }
nav svg:nth-child(2) { margin-bottom: 1px; }
nav .talk { width: 20px; height: 18px; margin: 0 0 -3px -1px; }
.scrollbar { width: 21px; height: 1080px; background: #f0f0f0; display: flex; flex-direction: column; align-items: center; justify-content: space-between; }
.up { margin-top: 9px; border: 5px solid transparent; border-top: 0; border-bottom: 5px solid #505050; }
.thumb { width: 17px; height: 111px; background: #c1c1c1; margin-top: 850px; }
.down { width: 21px; height: 21px; background: #d2d2d2; display: flex; justify-content: center; align-items: center; }
.down::before { content: ""; border: 5px solid transparent; border-bottom: 0; border-top: 5px solid #505050; }
```
